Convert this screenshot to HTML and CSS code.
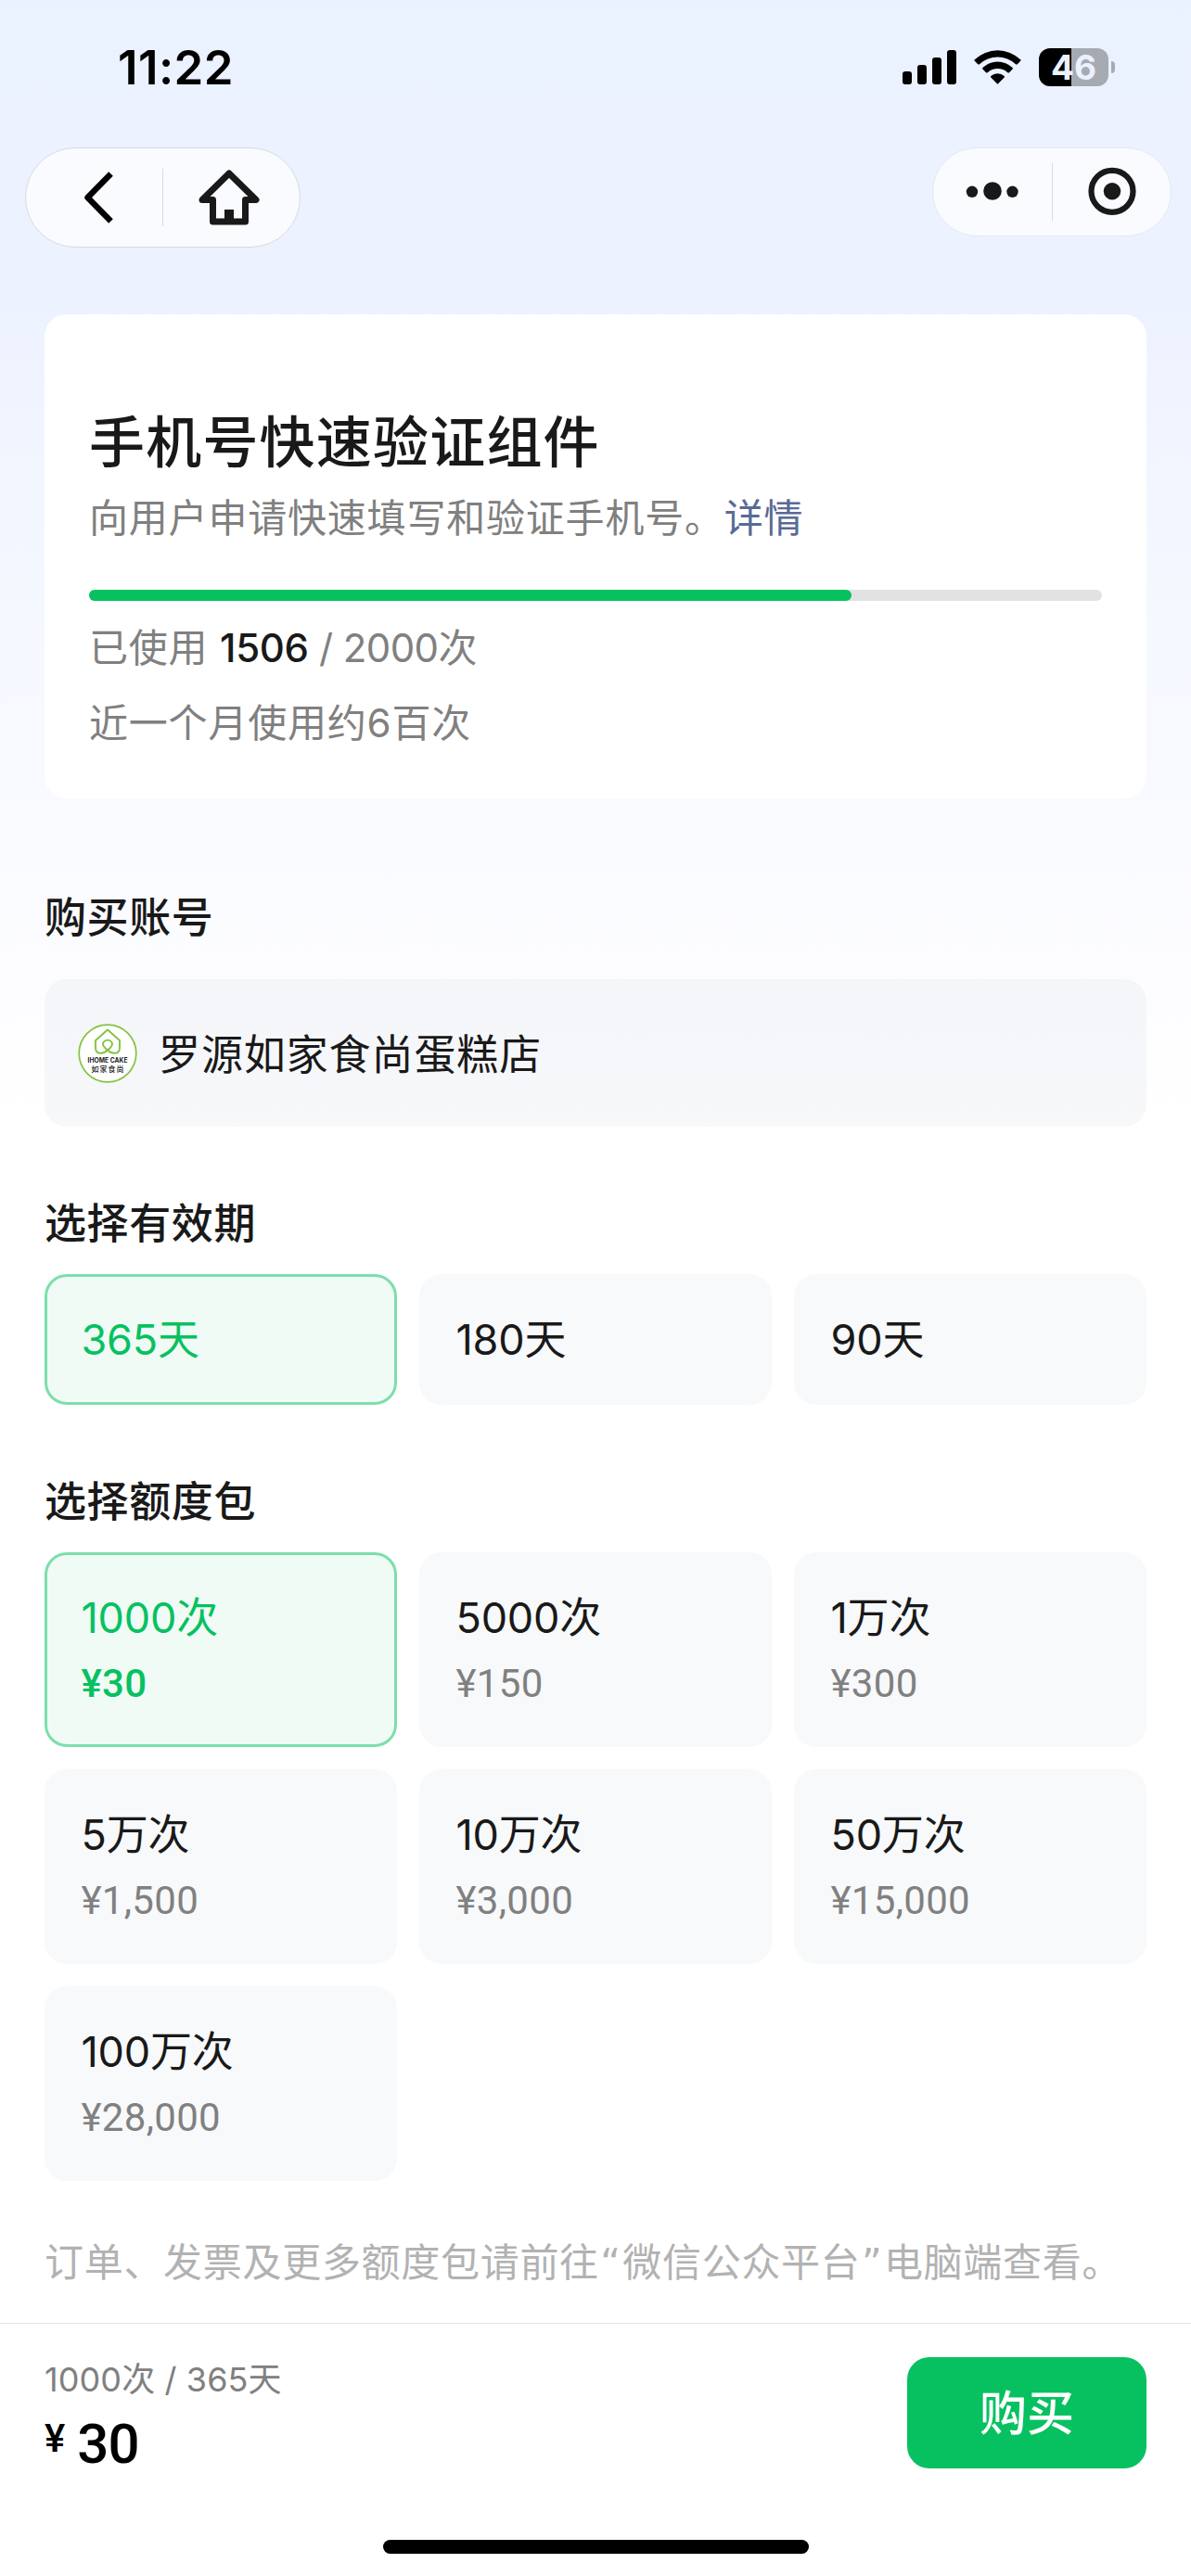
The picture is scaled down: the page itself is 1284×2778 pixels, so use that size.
FILE: index.html
```html
<!DOCTYPE html>
<html lang="zh-CN">
  <head>
    <meta charset="UTF-8" />
    <meta name="viewport" content="width=device-width, initial-scale=1.0" />
    <title>手机号快速验证组件</title>
    <link rel="stylesheet" href="styles.css">
  </head>
  <body>
    <header class="header">
      <div class="status-bar">
        <span class="time">11:22</span>
        <div class="status-icons">
          <svg class="signal" width="58" height="37" viewBox="0 0 58 37">
            <rect x="0" y="23" width="10" height="14" rx="3" />
            <rect x="16" y="16" width="10" height="21" rx="3" />
            <rect x="32" y="8" width="10" height="29" rx="3" />
            <rect x="48" y="0" width="10" height="37" rx="3" />
          </svg>
          <svg class="wifi" width="52" height="37" viewBox="0 0 52 37">
            <path d="M0.8 10.3 A35.5 35.5 0 0 1 50.2 10.3 Q51 11 50.2 11.8 L46.8 15.2 Q46 16 45 15.2 A28.5 28.5 0 0 0 6 15.2 Q5 16 4.2 15.2 L0.8 11.8 Q0 11 0.8 10.3 Z" />
            <path d="M9.4 19 A23 23 0 0 1 41.6 19 Q42.4 19.8 41.6 20.6 L38 24.2 Q37.2 25 36.3 24.2 A16 16 0 0 0 14.7 24.2 Q13.8 25 13 24.2 L9.4 20.6 Q8.6 19.8 9.4 19 Z" />
            <path d="M18.3 28 A11 11 0 0 1 32.7 28 Q33.5 28.8 32.7 29.6 L26.3 36 Q25.5 37 24.7 36 L18.3 29.6 Q17.5 28.8 18.3 28 Z" />
          </svg>
          <div class="battery">46</div>
          <div class="battery-cap"></div>
        </div>
      </div>
      <div class="nav">
        <div class="capsule capsule-left">
          <svg width="147" height="106" viewBox="0 0 147 106">
            <path d="M91.5 27.5 L66.5 53 L91.5 78.5" fill="none" stroke="#000" stroke-width="6.5" stroke-linejoin="round" />
          </svg>
          <div class="divider"></div>
          <svg width="148" height="106" viewBox="0 0 148 106">
            <path d="M72 27 L101 55.5 H89.5 V79 H54.5 V55.5 H43 Z" fill="none" stroke="#191919" stroke-width="7" stroke-linejoin="round" />
            <path d="M67 66 H77 V82 H67 Z" fill="#191919" />
          </svg>
        </div>
        <div class="capsule capsule-right">
          <svg width="128" height="94" viewBox="0 0 128 94" fill="#191919">
            <circle cx="42" cy="46.8" r="6.2" />
            <circle cx="64" cy="46" r="9.8" />
            <circle cx="85.5" cy="46.8" r="6.2" />
          </svg>
          <div class="divider"></div>
          <svg width="127" height="94" viewBox="0 0 127 94">
            <circle cx="65" cy="46.3" r="22.5" fill="none" stroke="#191919" stroke-width="6.2" />
            <circle cx="65" cy="46.3" r="9.2" fill="#191919" />
          </svg>
        </div>
      </div>
    </header>

    <main class="content">
      <div class="card">
        <h1>手机号快速验证组件</h1>
        <p class="desc">向用户申请快速填写和验证手机号。<a>详情</a></p>
        <div class="progress">
          <div class="progress-bar" style="width: 75.3%"></div>
        </div>
        <p class="usage">已使用 <span class="count"><b>1506</b> / 2000次</span></p>
        <p class="usage">近一个月使用约6百次</p>
      </div>

      <h2 class="first">购买账号</h2>
      <div class="account">
        <svg class="logo" width="64" height="64" viewBox="0 0 64 64">
          <circle cx="32" cy="32" r="30.8" fill="#fff" stroke="#84c341" stroke-width="1.7" />
          <path d="M32 28.5 C27.5 25 26 22.5 27.5 20 C29.5 16.8 34.5 16.8 36.5 20 C38 22.5 36.500 25 32 28.5 C28 32.500 19 34 19 26 V18 L32 6.5 L45 18 V26 C45 34 36 32.500 32 28.5" fill="none" stroke="#84c341" stroke-width="1.9" stroke-linejoin="round" />
          <text x="32" y="42.3" class="logo-en" textLength="43" lengthAdjust="spacingAndGlyphs">IHOME CAKE</text>
          <text x="32" y="52" class="logo-cn" textLength="35">如家食尚</text>
        </svg>
        <span class="account-name">罗源如家食尚蛋糕店</span>
      </div>

      <h2>选择有效期</h2>
      <div class="options days">
        <div class="option active">365天</div>
        <div class="option">180天</div>
        <div class="option">90天</div>
      </div>

      <h2>选择额度包</h2>
      <div class="options packs">
        <div class="option active">1000次<span class="price">¥30</span></div>
        <div class="option">5000次<span class="price">¥150</span></div>
        <div class="option">1万次<span class="price">¥300</span></div>
        <div class="option">5万次<span class="price">¥1,500</span></div>
        <div class="option">10万次<span class="price">¥3,000</span></div>
        <div class="option">50万次<span class="price">¥15,000</span></div>
        <div class="option">100万次<span class="price">¥28,000</span></div>
      </div>

      <p class="note">订单、发票及更多额度包请前往<span class="quote">“</span>微信公众平台<span class="quote">”</span>电脑端查看。</p>
    </main>

    <footer class="footer">
      <div class="footer-row">
        <div class="summary">
          <p class="summary-text">1000次 / 365天</p>
          <p class="total"><span>¥</span>30</p>
        </div>
        <button class="buy">购买</button>
      </div>
      <div class="home-bar"></div>
    </footer>
  </body>
</html>
```
FILE: styles.css
```css
* {
  box-sizing: border-box;
}

body {
  margin: 0;
  width: 1284px;
  height: 2778px;
  display: flex;
  flex-direction: column;
  overflow: hidden;
  font-family: Inter, "Noto Sans CJK SC", sans-serif;
  color: #191919;
  background: linear-gradient(
    to bottom,
    #ebf2ff 0,
    #edf2ff 330px,
    #f2f7ff 560px,
    #f9faff 860px,
    #ffffff 1210px
  );
}

h1,
h2,
p {
  margin: 0;
}

svg {
  display: block;
  flex: none;
}

.header {
  height: 339px;
}

.status-bar {
  height: 159px;
  padding: 0 82px 0 127px;
  display: flex;
  justify-content: space-between;
}

.time {
  margin-top: 43px;
  font-size: 51px;
  line-height: 60px;
  font-weight: 600;
  color: #000;
  letter-spacing: 0.4px;
}

.status-icons {
  display: flex;
  align-items: center;
  height: 41px;
  margin-top: 52px;
}

.wifi {
  margin: 0 18px 0 19px;
}

.battery {
  width: 75px;
  height: 41px;
  border-radius: 12px;
  background: linear-gradient(to right, #000 35px, #a6aab3 35px);
  color: #ebf1ff;
  font-size: 37px;
  line-height: 41px;
  font-weight: 700;
  text-align: center;
}

.battery-cap {
  width: 4px;
  height: 13px;
  margin-left: 3px;
  border-radius: 0 6px 6px 0;
  background: #a6aab3;
}

.nav {
  display: flex;
  justify-content: space-between;
  align-items: flex-start;
  padding: 0 21px 0 27px;
}

.capsule {
  display: flex;
  align-items: center;
  border-radius: 54px;
  background: #f9fbff;
  border: 1px solid #d8dade;
}

.capsule-left {
  width: 297px;
  height: 108px;
}

.capsule-right {
  width: 258px;
  height: 96px;
  border-color: #e4e7ee;
}

.divider {
  width: 1px;
  height: 62px;
  margin-right: -1px;
  background: #d9dbe0;
}

.content {
  padding: 0 48px;
}

.card {
  height: 522px;
  padding: 102px 48px 0;
  border-radius: 24px;
  background: #fff;
}

h1 {
  font-size: 60px;
  line-height: 72px;
  font-weight: 500;
  letter-spacing: 1.2px;
}

.desc {
  margin-top: 16px;
  font-size: 42px;
  line-height: 60px;
  letter-spacing: 0.8px;
  color: #808080;
}

.desc a {
  color: #576b95;
}

.progress {
  height: 12px;
  margin-top: 47px;
  border-radius: 6px;
  background: #e2e2e2;
}

.progress-bar {
  height: 12px;
  border-radius: 6px;
  background: #07c160;
}

.usage {
  margin-top: 21px;
  font-size: 42px;
  line-height: 60px;
  letter-spacing: 0.8px;
  color: #808080;
}

.usage .count {
  letter-spacing: -0.6px;
}

.usage b {
  font-weight: 500;
  letter-spacing: -0.3px;
  color: #191919;
}

h2 {
  margin-top: 75px;
  margin-bottom: 24px;
  font-size: 45px;
  line-height: 60px;
  font-weight: 500;
  letter-spacing: 0.6px;
}

h2.first {
  margin-top: 99px;
  margin-bottom: 36px;
}

.account {
  display: flex;
  align-items: center;
  gap: 23px;
  height: 159px;
  padding: 0 36px;
  border-radius: 24px;
  background: rgba(15, 40, 90, 0.03);
  font-size: 45px;
  letter-spacing: 0.9px;
}

.account-name {
  padding-bottom: 3px;
}

.logo-en,
.logo-cn {
  text-anchor: middle;
  fill: #222;
  letter-spacing: 0;
}

.logo-en {
  font-size: 7px;
  font-weight: 700;
}

.logo-cn {
  font-size: 8px;
  font-weight: 500;
}

.options {
  display: grid;
  grid-template-columns: repeat(3, 1fr);
  gap: 24px;
}

.option {
  padding: 38px 36.5px 0;
  border: 3px solid #f8f9fb;
  border-radius: 24px;
  background: #f8f9fb;
  font-size: 45px;
  line-height: 60px;
  letter-spacing: -0.2px;
}

.days .option {
  height: 141px;
}

.packs .option {
  height: 210px;
}

.price {
  display: block;
  margin-top: 11px;
  font-family: Roboto, sans-serif;
  font-size: 42px;
  letter-spacing: 0.3px;
  color: #808080;
}

.option.active,
.option.active .price {
  color: #07c160;
}

.option.active {
  border-color: #7cdfab;
  background: #f1fbf6;
}

.option.active .price {
  font-weight: 500;
}

.note {
  margin-top: 58px;
  font-size: 42px;
  line-height: 60px;
  letter-spacing: 0.7px;
  color: #b2b2b2;
  white-space: nowrap;
}

.quote {
  padding: 0 1.5px;
  font-family: "DejaVu Sans", sans-serif;
  line-height: 1;
}

.footer {
  height: 273px;
  margin-top: auto;
  padding: 36px 48px 0;
  border-top: 1px solid #e5e5e5;
  background: #fff;
}

.footer-row {
  display: flex;
  justify-content: space-between;
  height: 130px;
}

.summary-text {
  font-size: 36px;
  line-height: 48px;
  letter-spacing: 0.1px;
  color: #808080;
}

.total {
  display: flex;
  gap: 14px;
  margin-top: 9px;
  font-family: Roboto, sans-serif;
  font-size: 60px;
  line-height: 74px;
  font-weight: 500;
  letter-spacing: -1px;
  color: #000;
}

.total span {
  font-size: 42px;
  line-height: 62px;
}

.buy {
  width: 258px;
  height: 120px;
  padding: 0 0 6px;
  border: none;
  border-radius: 24px;
  background: #07c160;
  color: #fff;
  font-family: inherit;
  font-size: 51px;
  font-weight: 500;
}

.home-bar {
  width: 459px;
  height: 15px;
  margin: 67px auto 0;
  border-radius: 8px;
  background: #000;
}
```
